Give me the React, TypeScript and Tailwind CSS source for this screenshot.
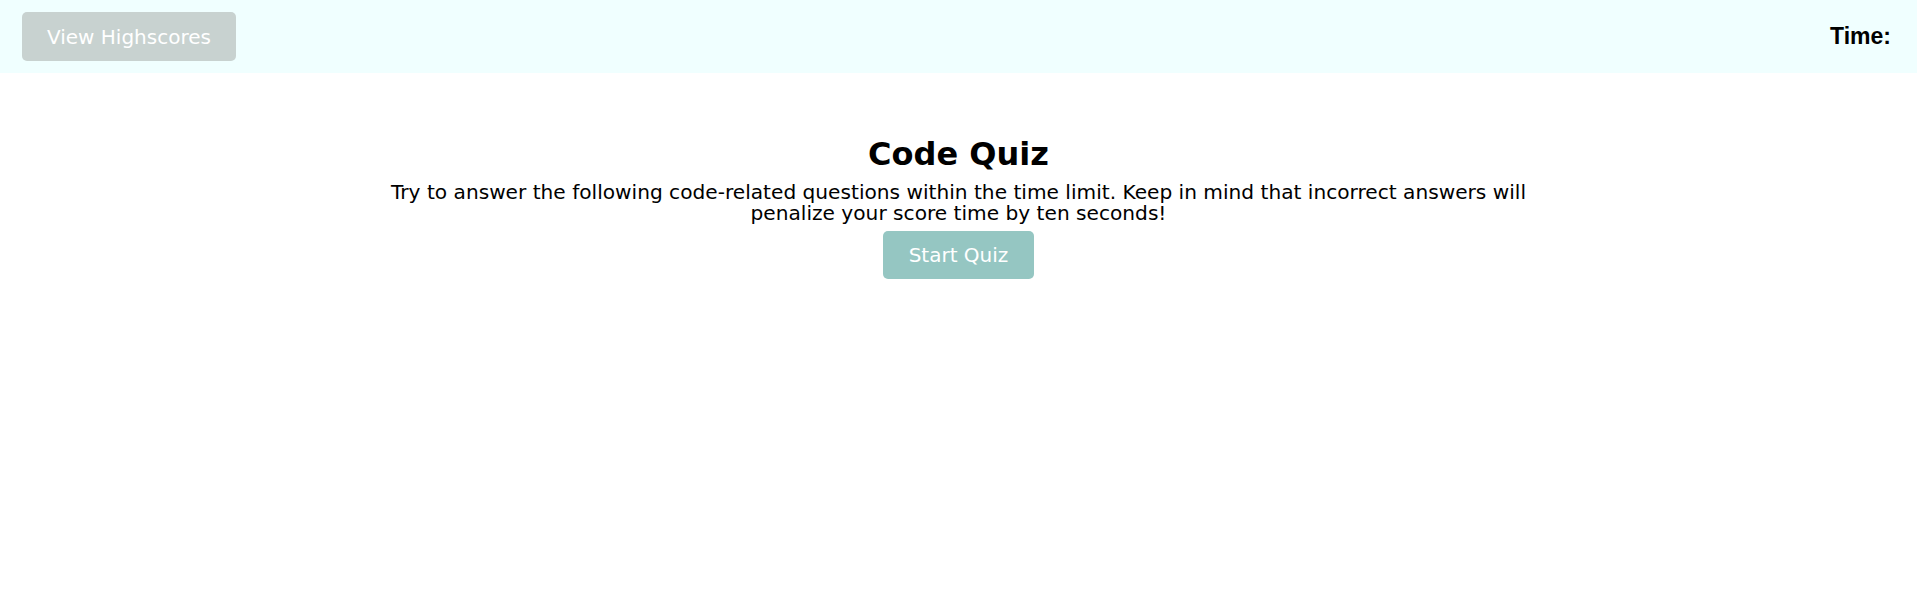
export default function App() {
    return (
        <div className="min-h-screen bg-white text-black" style={{ fontFamily: '"DejaVu Sans", Verdana, sans-serif' }}>
            <header className="h-[73px] bg-[#f0ffff] flex items-center justify-between pl-[22px] pr-[26px]">
                <button className="h-[49px] px-[25px] bg-[#c8d2d0] text-white text-[20px] rounded-[5px]">
                    View Highscores
                </button>
                <div className="font-bold text-[23px]" style={{ fontFamily: '"Liberation Sans", Arial, sans-serif' }}>
                    Time:
                </div>
            </header>
            <main className="flex flex-col items-center pt-[63px]">
                <h1 className="text-[32px] font-bold leading-[37px]">Code Quiz</h1>
                <p className="w-[1150px] text-center text-[20.15px] leading-[21px] mt-[9px]">
                    Try to answer the following code-related questions within the time limit. Keep in mind that incorrect answers will penalize your score time by ten seconds!
                </p>
                <button className="mt-[7px] h-[48px] px-[26px] bg-[#95c6c2] text-white text-[20px] rounded-[5px]">
                    Start Quiz
                </button>
            </main>
        </div>
    );
}
